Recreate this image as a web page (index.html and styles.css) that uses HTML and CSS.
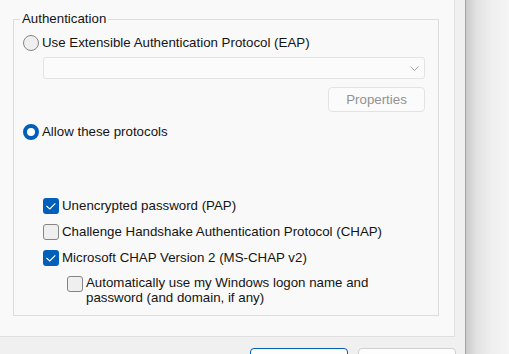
FILE: index.html
```html
<!DOCTYPE html>
<html lang="en">
<head>
<meta charset="utf-8">
<title>Authentication</title>
<link rel="stylesheet" href="styles.css">
</head>
<body>
<div class="screen">
  <div class="dialog">
    <div class="page">
      <fieldset class="group">
        <legend>Authentication</legend>
        <div class="group-body">
          <label class="opt"><span class="radio"></span><span>Use Extensible Authentication Protocol (EAP)</span></label>
          <div class="combo">
            <svg class="chev" width="9" height="5" viewBox="0 0 9 5"><path d="M0.5 0.5 L4.5 4.5 L8.5 0.5" fill="none" stroke="#a6a6a6" stroke-width="1"/></svg>
          </div>
          <div class="actions"><span class="btn-disabled">Properties</span></div>
          <label class="opt allow"><span class="radio on"></span><span>Allow these protocols</span></label>
          <div class="checks">
            <label class="opt"><span class="box on"><svg width="16" height="16" viewBox="0 0 16 16"><path d="M3.5 8 L6.8 11 L12.3 5.3" fill="none" stroke="#fff" stroke-width="1.1"/></svg></span><span>Unencrypted password (PAP)</span></label>
            <label class="opt"><span class="box"></span><span>Challenge Handshake Authentication Protocol (CHAP)</span></label>
            <label class="opt"><span class="box on"><svg width="16" height="16" viewBox="0 0 16 16"><path d="M3.5 8 L6.8 11 L12.3 5.3" fill="none" stroke="#fff" stroke-width="1.1"/></svg></span><span>Microsoft CHAP Version 2 (MS-CHAP v2)</span></label>
            <label class="opt sub"><span class="box"></span><span class="multi">Automatically use my Windows logon name and<br>password (and domain, if any)</span></label>
          </div>
        </div>
      </fieldset>
    </div>
    <div class="footer">
      <span class="btn primary"></span>
      <span class="btn"></span>
    </div>
  </div>
  <div class="shadow"></div>
</div>
</body>
</html>
```

FILE: styles.css
```css
html, body {
  margin: 0;
  padding: 0;
}
body {
  background: #f3f3f3;
  font: 13.3px/16px "Liberation Sans", Arial, sans-serif;
  color: #141414;
}
.screen {
  display: flex;
  height: 354px;
  overflow: hidden;
}
.dialog {
  flex: none;
  width: 466px;
  box-sizing: border-box;
  border-right: 1px solid #a4a4a4;
  background: #f0f0f0;
  display: flex;
  flex-direction: column;
}
.page {
  flex: none;
  width: 455px;
  height: 337px;
  box-sizing: border-box;
  padding: 11px 15px 0 13px;
  background: #f9f9f9;
  border-right: 1px solid #e0e0e0;
  border-bottom: 1px solid #e0e0e0;
}
.group {
  margin: 0;
  padding: 0 0 10px 6px;
  width: 426px;
  box-sizing: border-box;
  min-width: 0;
  border: 1px solid #dcdcdc;
}
.group legend {
  padding: 0 2px;
  line-height: 16px;
}
.group-body {
  padding: 8px 0 0 3px;
}
.opt {
  display: flex;
  align-items: center;
  gap: 3px;
  height: 16px;
  white-space: nowrap;
}
.radio {
  flex: none;
  width: 16px;
  height: 16px;
  box-sizing: border-box;
  border-radius: 50%;
  border: 1px solid #858585;
  background: #efefef;
}
.radio.on {
  border: 4px solid #005fb8;
  background: #ffffff;
}
.combo {
  margin: 6px 0 0 20px;
  width: 382px;
  height: 22px;
  box-sizing: border-box;
  border: 1px solid #e3e3e3;
  border-radius: 3px;
  background: #fbfbfb;
  display: flex;
  align-items: center;
  justify-content: flex-end;
  padding-right: 5px;
}
.actions {
  display: flex;
  justify-content: flex-end;
  width: 402px;
  margin-top: 8px;
}
.btn-disabled {
  width: 97px;
  height: 25px;
  box-sizing: border-box;
  border: 1px solid #e3e3e3;
  border-radius: 4px;
  background: #fbfbfb;
  color: #929292;
  display: flex;
  align-items: center;
  justify-content: center;
}
.allow {
  margin-top: 12px;
}
.checks {
  margin: 58px 0 0 20px;
  display: flex;
  flex-direction: column;
  gap: 10px;
}
.box {
  flex: none;
  width: 16px;
  height: 16px;
  box-sizing: border-box;
  border-radius: 3px;
  border: 1px solid #858585;
  background: #efefef;
}
.box.on {
  border: none;
  background: #005fb8;
}
.box svg {
  display: block;
}
.sub {
  margin-left: 24px;
  height: auto;
  align-items: flex-start;
}
.multi {
  line-height: 15px;
  margin-top: -1px;
}
.footer {
  display: flex;
  justify-content: flex-end;
  gap: 10px;
  padding: 11px 9px 0 0;
}
.btn {
  flex: none;
  width: 98px;
  height: 26px;
  box-sizing: border-box;
  border: 1px solid #d0d0d0;
  border-radius: 4px;
  background: #fdfdfd;
}
.btn.primary {
  border-color: #005fb8;
}
.shadow {
  flex: 1;
  background: linear-gradient(to right, #cbcbcb 0%, #e2e2e2 25%, #efefef 60%, #f5f5f5 100%);
}
```
